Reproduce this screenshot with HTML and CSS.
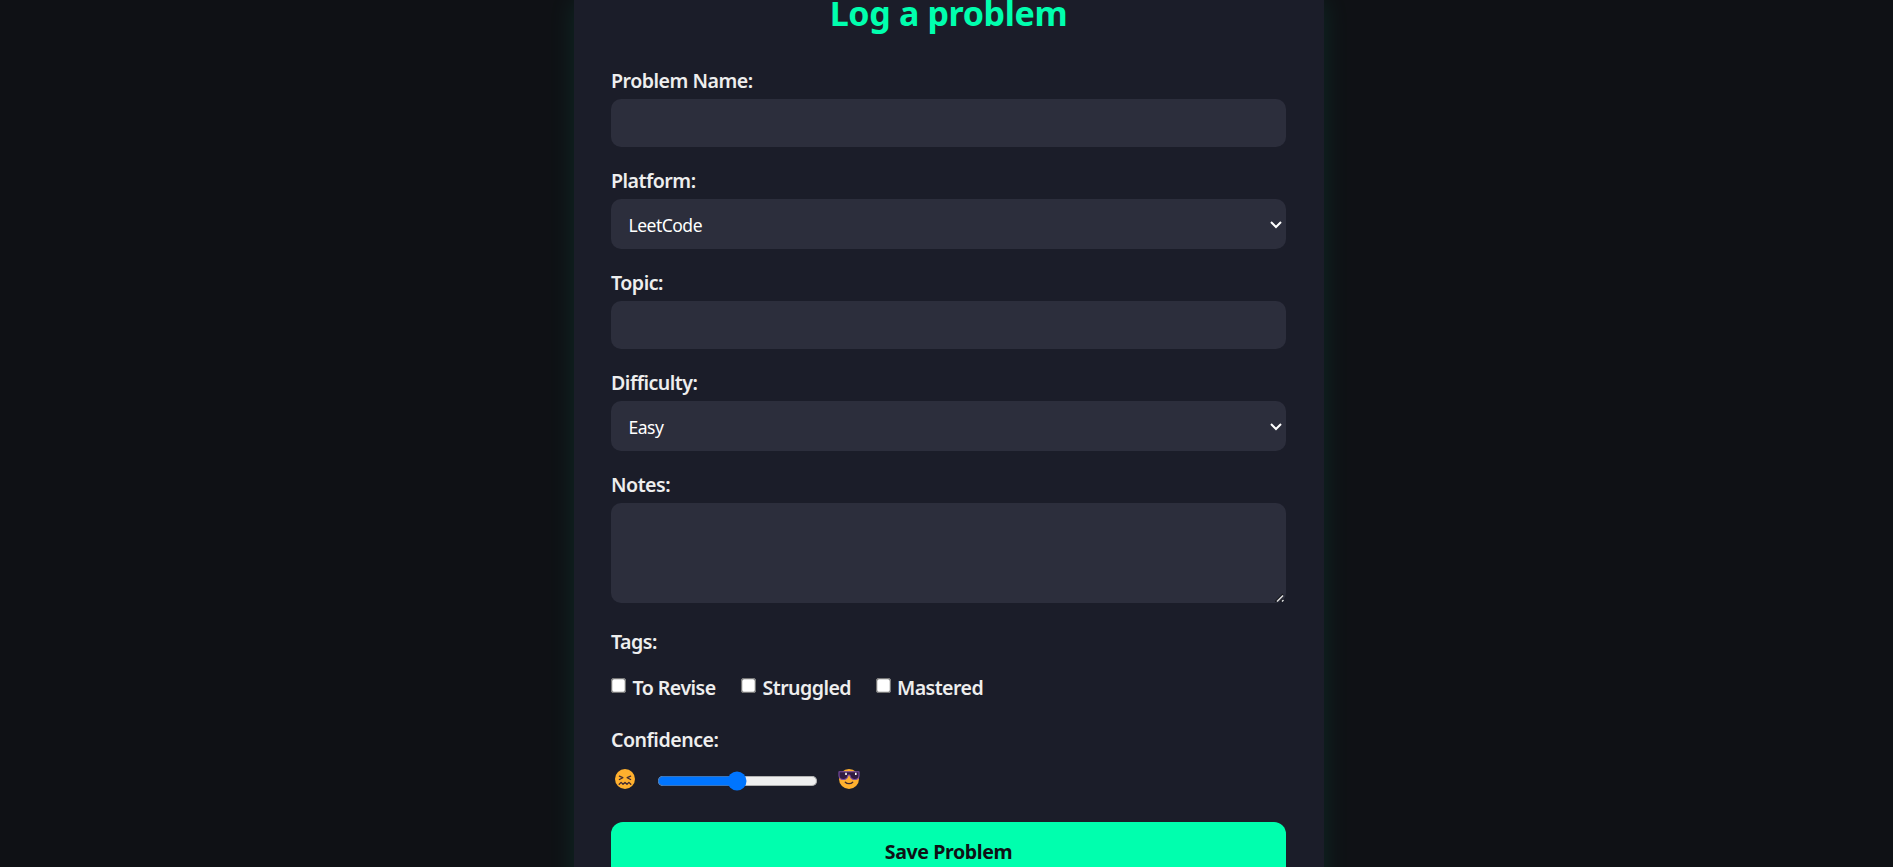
FILE: index.html
```html
<!DOCTYPE html>
<html lang="en">
<head>
<meta charset="utf-8">
<title>Log a problem</title>
<link rel="stylesheet" href="styles.css">
</head>
<body>
<main class="card">
  <h1 class="title">Log a problem</h1>
  <form class="form">
    <label class="label" for="name">Problem Name:</label>
    <input class="field" id="name" type="text">
    <label class="label" for="platform">Platform:</label>
    <select class="field select" id="platform"><option>LeetCode</option></select>
    <label class="label" for="topic">Topic:</label>
    <input class="field" id="topic" type="text">
    <label class="label" for="difficulty">Difficulty:</label>
    <select class="field select" id="difficulty"><option>Easy</option></select>
    <label class="label" for="notes">Notes:</label>
    <div class="notes-wrap">
      <textarea class="field notes" id="notes"></textarea>
      <svg class="grip" viewBox="0 0 9 9" aria-hidden="true">
        <path d="M0 9L8 1M5 9l3-3" stroke="#15161c" stroke-width="1.4"/>
        <path d="M2 8.5L8 2.500M7 8.500l1.500-1.500" stroke="#ddd" stroke-width="1.5"/>
      </svg>
    </div>
    <div class="label tags-label">Tags:</div>
    <div class="tags">
      <label class="tag tag-revise"><input class="check" type="checkbox"><span>To Revise</span></label>
      <label class="tag tag-struggled"><input class="check" type="checkbox"><span>Struggled</span></label>
      <label class="tag"><input class="check" type="checkbox"><span>Mastered</span></label>
    </div>
    <label class="label confidence-label" for="confidence">Confidence:</label>
    <div class="confidence">
      <svg class="emoji" viewBox="0 0 22 22" aria-hidden="true">
        <circle cx="11" cy="11" r="10" fill="#ffb02e"/>
        <path d="M5.4 8.2l3.4 1.5-3.4 1.8M16.6 8.2l-3.4 1.5 3.4 1.8M5.2 16.2l1.9-1.8 1.9 1.8 2-1.8 2 1.8 1.9-1.8 1.9 1.8" fill="none" stroke="#402a32" stroke-width="1.3" stroke-linecap="round" stroke-linejoin="round"/>
      </svg>
      <input class="slider" id="confidence" type="range" min="1" max="5" value="3">
      <svg class="emoji" viewBox="0 0 22 22" aria-hidden="true">
        <circle cx="11" cy="11" r="10" fill="#ffb02e"/>
        <path d="M1 3.8h20v3.7c0 2.4-1.4 4-4.3 4-2.8 0-4.4-1.4-4.9-4.5h-1.6c-.5 3.1-2.1 4.5-4.9 4.5-2.9 0-4.3-1.6-4.3-4z" fill="#321b41" stroke="#7b4ba5" stroke-width="1.1" stroke-linejoin="round"/>
        <path d="M7.2 4.8h1.6v2.3H7.2zM17 4.8h1.6v2.3H17z" fill="#fff"/>
        <path d="M7.3 14.2c1.8 1.9 5.6 1.9 7.4 0" fill="none" stroke="#402a32" stroke-width="1.3" stroke-linecap="round"/>
      </svg>
    </div>
    <button class="save" type="button">Save Problem</button>
  </form>
</main>
</body>
</html>
```
FILE: styles.css
```css
* { box-sizing: border-box; }

body {
  margin: 0;
  height: 867px;
  overflow: hidden;
  background: #0f1115;
  color: #eee;
  font-family: "Segoe UI", "Noto Sans", "Open Sans", sans-serif;
}

.card {
  width: 750px;
  height: 900px;
  margin-left: 573.5px;
  padding: 0 37.5px;
  background: #1b1d29;
  box-shadow: 0 0 25px rgba(0, 255, 174, 0.1);
}

.title {
  margin: 0;
  height: 66px;
  color: #00ffae;
  font-size: 34px;
  font-weight: 700;
  line-height: 26px;
  letter-spacing: -0.35px;
  text-align: center;
  white-space: nowrap;
}

.form { display: flex; flex-direction: column; }

.label {
  height: 33px;
  padding-top: 1px;
  font-size: 19.6px;
  font-weight: 600;
  line-height: 27px;
  letter-spacing: -0.5px;
}

.field {
  flex: none;
  width: 675px;
  height: 48px;
  margin: 0 0 19px;
  padding: 0 17px;
  border: 0;
  border-radius: 10px;
  background-color: #2c2e3c;
  color: #fff;
  font-family: inherit;
  font-size: 18px;
}

.select {
  zoom: 1.25;
  width: 540px;
  height: 40px;
  margin-bottom: 15.2px;
  padding: 1.6px 10px 0;
  border-radius: 8px;
  font-size: 14px;
  letter-spacing: -0.4px;
}

.notes-wrap { position: relative; height: 125px; }

.notes {
  display: block;
  height: 100px;
  margin: 0;
  resize: none;
}

/* Resize handle over the corner of the notes box */
.grip {
  position: absolute;
  right: 2px;
  top: 90px;
  width: 9px;
  height: 9px;
}

.tags-label { height: 41px; padding-top: 0; }

.tags { display: flex; height: 56px; padding-top: 4px; align-items: flex-start; }

.tag {
  display: flex;
  align-items: flex-start;
  font-size: 19.6px;
  font-weight: 600;
  line-height: 30px;
  letter-spacing: -0.55px;
  white-space: nowrap;
}

.tag-revise { width: 130px; }
.tag-struggled { width: 134.5px; }

.check { zoom: 1.25; margin: 4px 4.2px 0 0; flex: none; }

.confidence-label { height: 35px; }

.confidence { display: flex; height: 62px; padding: 8px 0 0 3px; }

.emoji { width: 22px; height: 22px; flex: none; }

.slider { zoom: 1.25; width: 129px; height: 16px; margin: 2px 16.4px 0; }

.save {
  height: 60px;
  padding: 0 0 2px;
  border: 0;
  border-radius: 12px;
  background: #00ffae;
  color: #0f1115;
  font: 700 19.6px/27px "Segoe UI", "Noto Sans", sans-serif;
  letter-spacing: -0.4px;
}
```
